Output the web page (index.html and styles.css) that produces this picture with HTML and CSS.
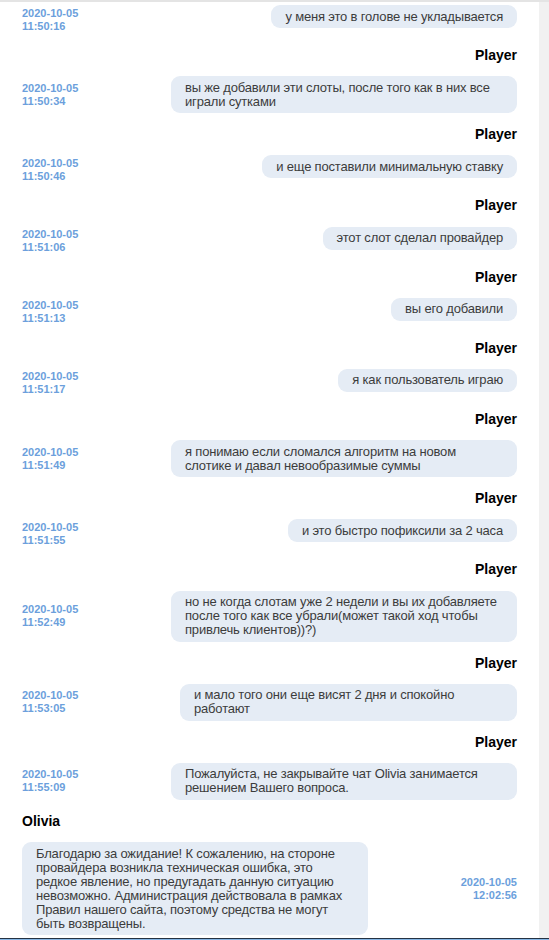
FILE: index.html
```html
<!DOCTYPE html>
<html lang="ru">
<head>
<meta charset="utf-8">
<title>Chat</title>
<link rel="stylesheet" href="styles.css">
</head>
<body>
<div class="topline"></div>
<div class="main">
  <div class="chat">
    <div class="row">
      <div class="ts">2020-10-05<br>11:50:16</div>
      <div class="bubble">у меня это в голове не укладывается</div>
    </div>
    <div class="name">Player</div>
    <div class="row">
      <div class="ts">2020-10-05<br>11:50:34</div>
      <div class="bubble">вы же добавили эти слоты, после того как в них все играли сутками</div>
    </div>
    <div class="name">Player</div>
    <div class="row">
      <div class="ts">2020-10-05<br>11:50:46</div>
      <div class="bubble">и еще поставили минимальную ставку</div>
    </div>
    <div class="name">Player</div>
    <div class="row">
      <div class="ts">2020-10-05<br>11:51:06</div>
      <div class="bubble">этот слот сделал провайдер</div>
    </div>
    <div class="name">Player</div>
    <div class="row">
      <div class="ts">2020-10-05<br>11:51:13</div>
      <div class="bubble">вы его добавили</div>
    </div>
    <div class="name">Player</div>
    <div class="row">
      <div class="ts">2020-10-05<br>11:51:17</div>
      <div class="bubble">я как пользователь играю</div>
    </div>
    <div class="name">Player</div>
    <div class="row">
      <div class="ts">2020-10-05<br>11:51:49</div>
      <div class="bubble">я понимаю если сломался алгоритм на новом слотике и давал невообразимые суммы</div>
    </div>
    <div class="name">Player</div>
    <div class="row">
      <div class="ts">2020-10-05<br>11:51:55</div>
      <div class="bubble">и это быстро пофиксили за 2 часа</div>
    </div>
    <div class="name">Player</div>
    <div class="row">
      <div class="ts">2020-10-05<br>11:52:49</div>
      <div class="bubble">но не когда слотам уже 2 недели и вы их добавляете после того как все убрали(может такой ход чтобы привлечь клиентов))?)</div>
    </div>
    <div class="name">Player</div>
    <div class="row">
      <div class="ts">2020-10-05<br>11:53:05</div>
      <div class="bubble bubble-narrow">и мало того они еще висят 2 дня и спокойно работают</div>
    </div>
    <div class="name">Player</div>
    <div class="row">
      <div class="ts">2020-10-05<br>11:55:09</div>
      <div class="bubble">Пожалуйста, не закрывайте чат Olivia занимается решением Вашего вопроса.</div>
    </div>
    <div class="name name-left">Olivia</div>
    <div class="row">
      <div class="bubble bubble-left">Благодарю за ожидание! К сожалению, на стороне провайдера возникла техническая ошибка, это редкое явление, но предугадать данную ситуацию невозможно. Администрация действовала в рамках Правил нашего сайта, поэтому средства не могут быть возвращены.</div>
      <div class="ts ts-right">2020-10-05<br>12:02:56</div>
    </div>
  </div>
  <div class="strip"></div>
</div>
<div class="bottomline"></div>
</body>
</html>
```
FILE: styles.css
```css
html, body {
  margin: 0;
  padding: 0;
}
body {
  width: 549px;
  height: 940px;
  overflow: hidden;
  display: flex;
  flex-direction: column;
  background: #ffffff;
  font-family: "Liberation Sans", Arial, sans-serif;
}
.topline {
  height: 2px;
  background: #e4e4e4;
  flex: none;
}
.main {
  flex: 1;
  display: flex;
  overflow: hidden;
}
.chat {
  flex: 1;
  padding: 3px 22px 0 22px;
  overflow: hidden;
}
.strip {
  width: 10px;
  flex: none;
  background: #f1f1f1;
}
.bottomline {
  flex: none;
  height: 1px;
  background: #243242;
  border-bottom: 1px solid #86b6e4;
}
.row {
  display: flex;
  align-items: center;
  min-height: 29px;
}
.ts {
  font-size: 11px;
  font-weight: bold;
  line-height: 13px;
  color: #6c9fdc;
  white-space: nowrap;
}
.ts-right {
  margin-left: auto;
  text-align: right;
}
.bubble {
  align-self: flex-start;
  margin-left: auto;
  max-width: 346px;
  box-sizing: border-box;
  padding: 4.5px 14px 4.5px 14px;
  font-size: 13px;
  letter-spacing: -0.18px;
  line-height: 14px;
  color: #3c3c3c;
  background: #e5ecf5;
  border-radius: 9px;
}
.bubble-narrow {
  max-width: 337px;
}
.bubble-left {
  margin-left: 0;
}
.name {
  margin: 13px 0 13.2px;
  font-size: 14px;
  font-weight: bold;
  line-height: 16px;
  color: #000000;
  text-align: right;
}
.name-left {
  text-align: left;
}
```
